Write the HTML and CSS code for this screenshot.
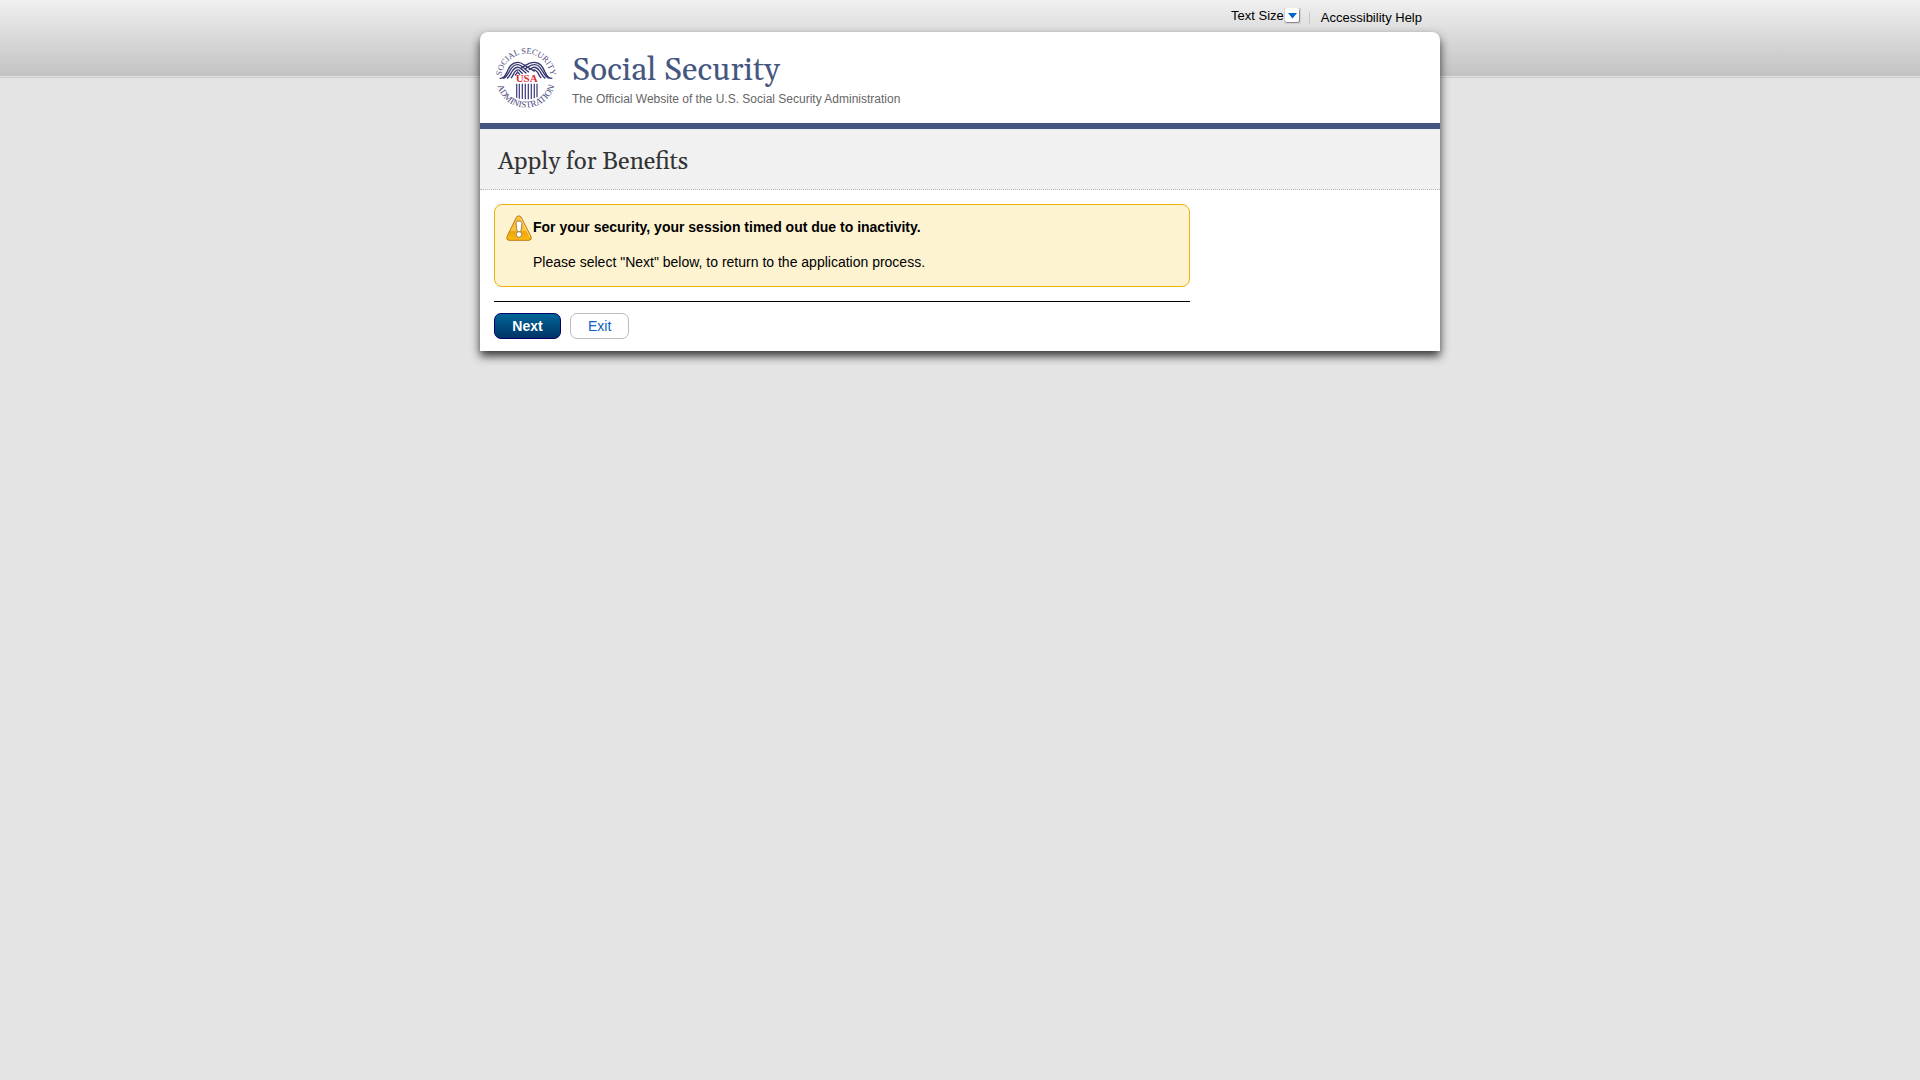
FILE: index.html
```html
<!DOCTYPE html>
<html lang="en">
<head>
<meta charset="utf-8">
<meta name="viewport" content="width=device-width, initial-scale=1">
<title>Apply for Benefits - Social Security</title>
<link rel="stylesheet" href="styles.css">
</head>
<body>
<div class="page">
  <nav class="tools" aria-label="Page tools">
    <button type="button" class="text-size">Text Size<svg class="text-size-icon" viewBox="0 0 17 16" aria-hidden="true">
      <rect width="17" height="16" fill="#d2d2d2"/>
      <rect x="1" y="1" width="15" height="14" rx="3" fill="#8b8b8b"/>
      <rect x="1" y="0" width="14" height="14" rx="2" fill="#fff"/>
      <path d="M4 5h9L8.500 10.500z" fill="#06c"/>
    </svg></button>
    <a class="help-link" href="#help">Accessibility Help</a>
  </nav>
  <div class="card">
    <header class="banner">
      <svg class="seal" viewBox="0 0 180 180" role="img" aria-label="Social Security Administration">
        <defs>
          <path id="arc-top" d="M16 91A74 74 0 0 1 164 91"/>
          <path id="arc-bottom" d="M1 90A89 89 0 0 0 179 90"/>
        </defs>
        <g>
          <text class="seal-top" text-anchor="middle"><textPath href="#arc-top" startOffset="50%">SOCIAL SECURITY</textPath></text>
          <text class="seal-bottom" text-anchor="middle"><textPath href="#arc-bottom" startOffset="50%">ADMINISTRATION</textPath></text>
        </g>
        <g fill="none" stroke="#35366f" stroke-width="4">
          <path d="M11 91C24 92 28 82 33 72C40 56 47 43 66 43C78 43 83 51 94 57L116 70"/>
          <path d="M21 91C32 88 36 76 42 67C49 55 57 49 66 50C76 51 84 61 99 73"/>
          <path d="M33 91C42 85 43 77 50 68C55 60 61 57 68 58C76 60 81 69 91 76"/>
          <path d="M45 90C51 85 51 78 57 71C61 66 64 64 69 66L80 77"/>
          <path d="M57 82L65 72L72 80"/>
          <path d="M169 91C156 92 152 82 147 72C140 56 133 43 114 43C104 43 97 46 88 52L75 61"/>
          <path d="M160 91C148 88 144 76 138 67C131 55 123 49 114 50C105 50 97 56 87 63"/>
          <path d="M148 91C138 85 137 77 130 68C125 60 119 57 112 58L98 65"/>
          <path d="M136 90C129 85 129 78 123 71C119 66 116 64 111 66"/>
        </g>
        <path d="M62 107v42M70 107v45M79 107v46M88 107v47M97 107v47M106 107v46M115 107v44M123 107v41" fill="none" stroke="#4a4a86" stroke-width="4"/>
        <text class="seal-usa" x="92" y="103" text-anchor="middle">USA</text>
      </svg>
      <div class="brand">
        <p class="brand-name">Social Security</p>
        <p class="brand-tag">The Official Website of the U.S. Social Security Administration</p>
      </div>
    </header>
    <h1 class="title">Apply for Benefits</h1>
    <main class="content">
      <div class="alert" role="alert">
        <svg class="alert-icon" viewBox="0 0 26 26" aria-hidden="true">
          <defs>
            <linearGradient id="amber" x1="0" y1="0" x2="0" y2="1">
              <stop offset="0" stop-color="#f7b92c"/><stop offset=".6" stop-color="#f9c440"/>
              <stop offset=".65" stop-color="#eda309"/><stop offset="1" stop-color="#fdbb12"/>
            </linearGradient>
          </defs>
          <path d="M10.500 2Q12.800-.5 15 2L25 21.500Q26 25.300 23 25.300H3Q0 25.300 1 21.500Z" fill="url(#amber)" stroke="#c17b12"/>
          <path d="M11 3.500Q12.800 1 14.500 3.500L24 22" fill="none" stroke="#ffda71"/>
          <path d="M10 8q0-2 3-2t3 2l-1 8q-2 2-4 0z" fill="#fff" stroke="#a98750"/>
          <circle cx="13" cy="19.500" r="2.800" fill="#fff" stroke="#a98750"/>
        </svg>
        <div class="alert-text">
          <p><strong>For your security, your session timed out due to inactivity.</strong></p>
          <p>Please select "Next" below, to return to the application process.</p>
        </div>
      </div>
      <div class="actions">
        <button type="button" class="btn btn-primary">Next</button>
        <button type="button" class="btn">Exit</button>
      </div>
    </main>
  </div>
</div>
</body>
</html>
```
FILE: styles.css
```css
* { box-sizing: border-box; }
body {
  margin: 0;
  min-height: 100vh;
  font: 14px/18px "Liberation Sans", Arial, sans-serif;
  color: #000;
  background:
    linear-gradient(#cacaca, #cacaca) 0 77px / 100% 1px no-repeat,
    linear-gradient(#f0f0f0, #c2c2c2) 0 0 / 100% 76px no-repeat,
    #e4e4e4;
}
p, h1 { margin: 0; }
button { font: inherit; cursor: pointer; }

.page { max-width: 960px; margin: 0 auto; }
.tools {
  display: flex;
  justify-content: flex-end;
  align-items: flex-start;
  gap: 8px;
  height: 32px;
  padding: 8px 18px 0 0;
  font-size: 13px;
  line-height: 16px;
}
.text-size { display: flex; padding: 0; border: 0; background: none; color: #000; }
.text-size-icon { width: 17px; height: 16px; }
.help-link {
  margin-top: 4px;
  padding-left: 11px;
  border-left: 1px solid #c8c8c8;
  line-height: 12px;
  color: #000;
  text-decoration: none;
}

.card {
  background: #fff;
  border-radius: 8px 8px 0 0;
  box-shadow: 0 5px 10px #333;
}
.banner {
  display: flex;
  align-items: center;
  gap: 16px;
  min-height: 97px;
  padding: 0 16px;
  border-bottom: 6px solid #455780;
}
.seal { width: 60px; height: 60px; overflow: visible; }
.seal-top, .seal-bottom { font: 25px "Liberation Serif", serif; fill: #4b4b80; }
.seal-bottom { font-size: 27px; }
.seal-usa { font: bold 33px "Liberation Serif", serif; fill: #e12d35; }
.brand { padding-top: 2px; }
.brand-name { font: 32px/40px Gelasio, Georgia, "Liberation Serif", serif; color: #455780; }
.brand-tag { font-size: 12px; line-height: 16px; color: #666; }
.title {
  padding: 15px 18px 9px;
  border-bottom: 1px dotted #bbb;
  background: #f1f1f1;
  font: 24px/36px Gelasio, Georgia, "Liberation Serif", serif;
  color: #333;
}
.content { max-width: 724px; padding: 14px 14px 12px; }
.alert {
  display: flex;
  gap: 1px;
  padding: 10px 11px 11px;
  border: 1px solid #e8b40c;
  border-radius: 8px;
  background: #fdf3d1;
}
.alert-icon { width: 26px; height: 26px; }
.alert-text { display: grid; gap: 17px; padding: 3px 0 4px; }
.actions {
  display: flex;
  gap: 9px;
  margin-top: 14px;
  padding-top: 11px;
  border-top: 1px solid #000;
}
.btn {
  height: 26px;
  padding: 0 17px;
  border: 1px solid #bbb;
  border-radius: 7px;
  background: #fff;
  color: #0a62c4;
}
.btn-primary {
  min-width: 67px;
  border-color: #006;
  background: linear-gradient(#069, #036);
  color: #fff;
  font-weight: bold;
}
```
